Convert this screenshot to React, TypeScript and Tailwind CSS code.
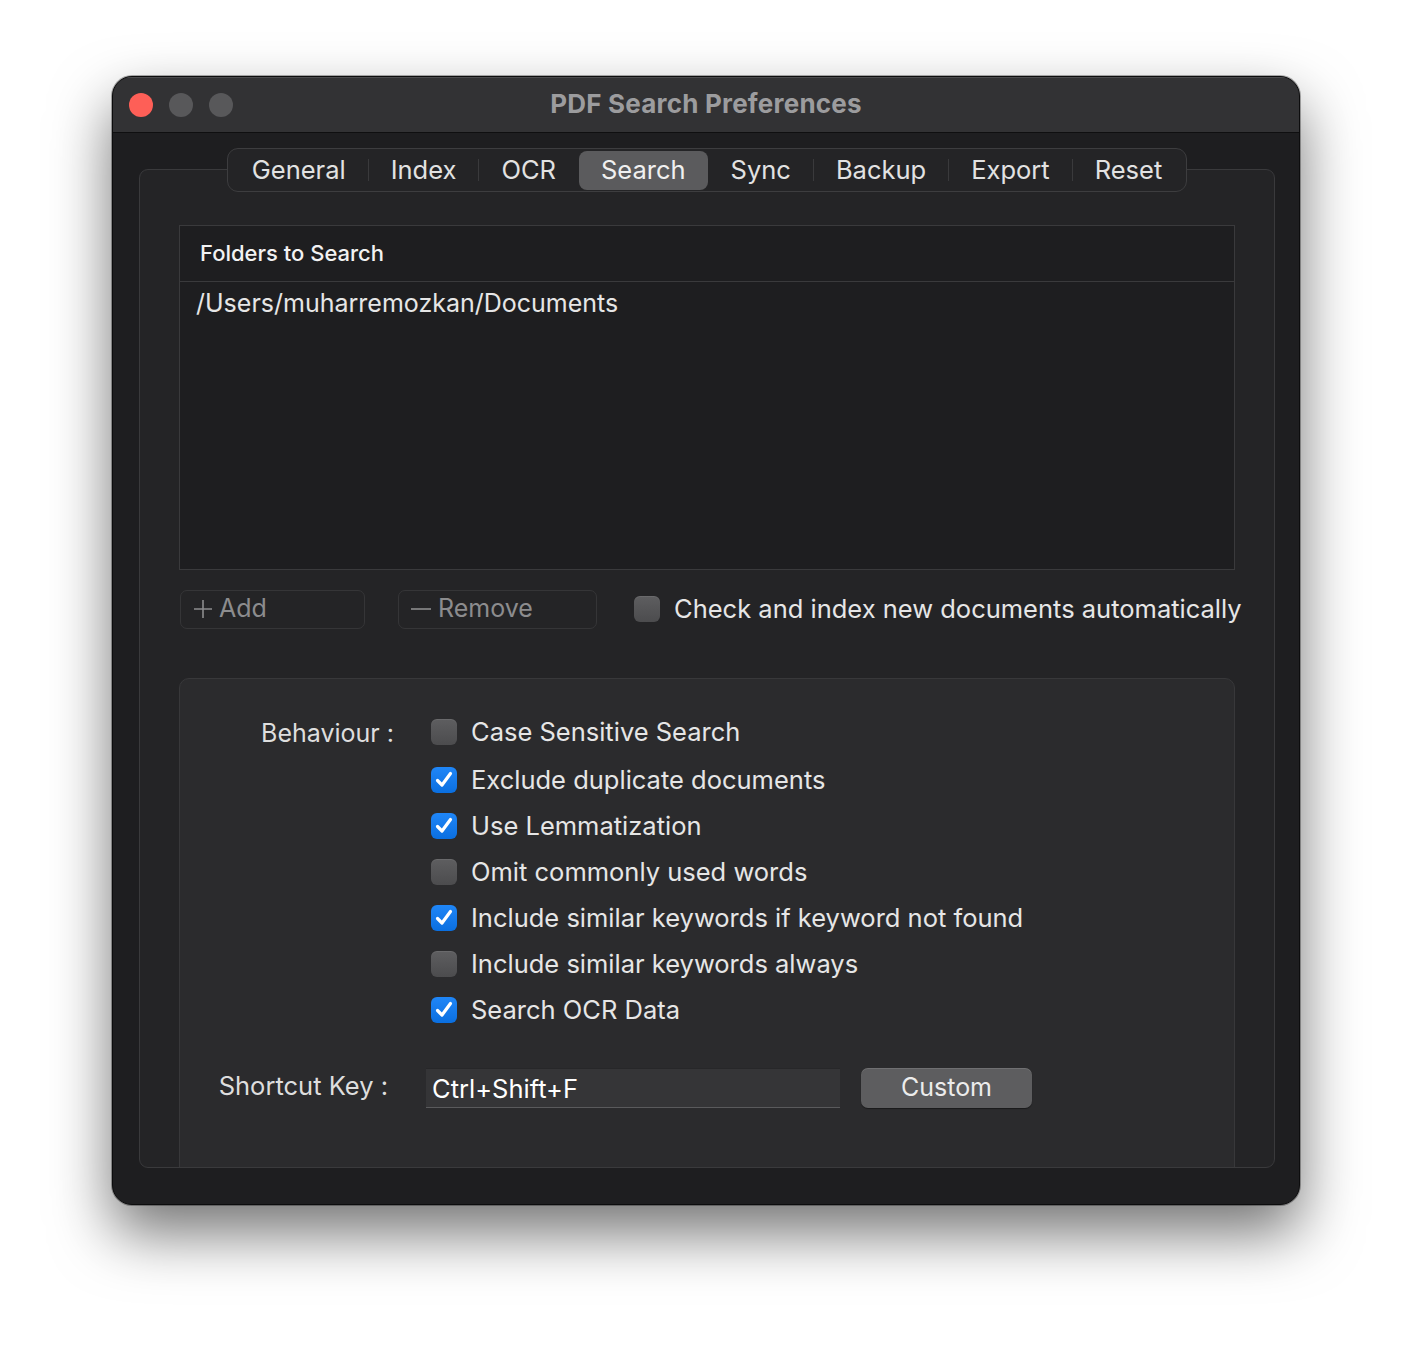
import { useState } from 'react';

const tabs = ['General', 'Index', 'OCR', 'Search', 'Sync', 'Backup', 'Export', 'Reset'];

const behaviours = [
  { label: 'Case Sensitive Search', checked: false },
  { label: 'Exclude duplicate documents', checked: true },
  { label: 'Use Lemmatization', checked: true },
  { label: 'Omit commonly used words', checked: false },
  { label: 'Include similar keywords if keyword not found', checked: true },
  { label: 'Include similar keywords always', checked: false },
  { label: 'Search OCR Data', checked: true },
];

function CheckBox({ checked }: { checked: boolean }) {
  if (checked) {
    return (
      <span className="flex h-[26px] w-[26px] shrink-0 items-center justify-center rounded-[6px] bg-gradient-to-b from-[#1f86f7] to-[#0a6fe0]">
        <svg width="22" height="22" viewBox="0 0 22 22" fill="none">
          <path d="M4.5 11.5 L9 16 L17.5 4.5" stroke="white" strokeWidth="3.2" strokeLinecap="round" strokeLinejoin="round" />
        </svg>
      </span>
    );
  }
  return (
    <span className="block h-[26px] w-[26px] shrink-0 rounded-[6px] bg-gradient-to-b from-[#5e5e60] to-[#4c4c4e] shadow-[inset_0_1px_0_rgba(255,255,255,0.08)]" />
  );
}

export default function App() {
  const [active] = useState('Search');

  return (
    <div className="min-h-[1354px] bg-white pl-[112px] pt-[76px] font-['Inter','Liberation_Sans',sans-serif]">
      <div className="flex h-[1129px] w-[1188px] flex-col overflow-hidden rounded-[20px] border border-[#0c0c0d] bg-[#1e1e20] shadow-[0_28px_60px_rgba(0,0,0,0.55),0_0_0_1px_rgba(0,0,0,0.3)]">
        {/* Title bar */}
        <div className="relative flex h-[56px] shrink-0 items-center border-b border-[#0f0f10] bg-[#323234] shadow-[inset_0_1px_0_rgba(255,255,255,0.12)]">
          <div className="flex items-center gap-[16px] pl-[16px]">
            <span className="h-[24px] w-[24px] rounded-full bg-[#fe5f57]" />
            <span className="h-[24px] w-[24px] rounded-full bg-[#58585a]" />
            <span className="h-[24px] w-[24px] rounded-full bg-[#58585a]" />
          </div>
          <div className="pointer-events-none absolute inset-x-0 -mt-[2px] text-center text-[26px] font-bold tracking-[0.2px] text-[#9c9c9e]">
            PDF Search Preferences
          </div>
        </div>

        {/* Body */}
        <div className="flex min-h-0 flex-1 flex-col pb-[36px] pl-[26px] pr-[24px] pt-[36px]">
          <div className="flex min-h-0 flex-1 flex-col rounded-[9px] border border-[#3a3a3c] bg-[#242426]">
            {/* Segmented control */}
            <div className="-mt-[22px] flex justify-center">
              <div className="flex h-[44px] items-center rounded-[11px] border border-[#3d3d3f] bg-[#242426] px-[2px]">
                {tabs.map((t, i) => {
                  const sel = t === active;
                  const prevSel = i > 0 && tabs[i - 1] === active;
                  return (
                    <div key={t} className="flex items-center">
                      {i > 0 && (
                        <span className={`h-[22px] w-px ${sel || prevSel ? 'bg-transparent' : 'bg-[#3a3a3c]'}`} />
                      )}
                      <span
                        className={`flex h-[39px] items-center rounded-[8px] px-[22px] text-[25.5px] ${
                          sel ? 'bg-[#5b5b5d] text-[#f0f0f0]' : 'text-[#e2e2e2]'
                        }`}
                      >
                        {t}
                      </span>
                    </div>
                  );
                })}
              </div>
            </div>

            <div className="flex min-h-0 flex-1 flex-col overflow-hidden rounded-b-[9px] px-[39px] pt-[33px]">
              {/* Folder table */}
              <div className="flex h-[345px] shrink-0 flex-col border border-[#3a3a3c] bg-[#1e1e20]">
                <div className="flex h-[56px] shrink-0 items-center border-b border-[#3a3a3c] px-[20px] text-[22px] font-medium text-[#f2f2f2]">
                  Folders to Search
                </div>
                <div className="px-[16px] pt-[3px] text-[25px] text-[#e6e6e6]">/Users/muharremozkan/Documents</div>
              </div>

              {/* Buttons row */}
              <div className="mt-[19px] flex h-[40px] shrink-0 items-center">
                <button className="ml-[1px] flex h-[39px] w-[185px] shrink-0 items-center gap-[6px] rounded-[7px] border border-[#353537] pl-[12px] text-[25px] text-[#8c8c8e]">
                  <svg width="20" height="20" viewBox="0 0 20 20">
                    <path d="M10 1 V19 M1 10 H19" stroke="#8c8c8e" strokeWidth="1.6" />
                  </svg>
                  Add
                </button>
                <button className="ml-[33px] flex h-[39px] w-[199px] shrink-0 items-center gap-[7px] rounded-[7px] border border-[#353537] pl-[12px] text-[25px] text-[#8c8c8e]">
                  <svg width="20" height="20" viewBox="0 0 20 20">
                    <path d="M0 10 H20" stroke="#8c8c8e" strokeWidth="1.6" />
                  </svg>
                  Remove
                </button>
                <div className="ml-[37px] flex shrink-0 items-center gap-[14px]">
                  <CheckBox checked={false} />
                  <span className="whitespace-nowrap text-[25.5px] text-[#e6e6e6]">Check and index new documents automatically</span>
                </div>
              </div>

              {/* Behaviour group */}
              <div className="mt-[49px] h-[540px] shrink-0 rounded-[10px] border border-[#38383a] bg-[#2b2b2d] pt-[39px]">
                <div className="flex">
                  <div className="-mt-[3px] w-[214px] shrink-0 text-right text-[25px] text-[#dedede]">Behaviour :</div>
                  <div className="ml-[37px] flex flex-col">
                    {behaviours.map((b, i) => (
                      <div key={b.label} className={`flex h-[28px] items-center gap-[14px] ${i === 0 ? '' : i === 1 ? 'mt-[20px]' : 'mt-[18px]'}`}>
                        <CheckBox checked={b.checked} />
                        <span className="whitespace-nowrap text-[25.5px] text-[#e6e6e6]">{b.label}</span>
                      </div>
                    ))}
                  </div>
                </div>

                <div className="mt-[44px] flex items-center">
                  <div className="-mt-[4px] w-[208px] shrink-0 text-right text-[25.5px] text-[#dedede]">Shortcut Key :</div>
                  <div className="ml-[38px] flex h-[40px] w-[414px] items-center border-b border-[#5a5a5c] bg-[#353537] pl-[6px] pt-[4px] text-[25.5px] text-white shadow-[inset_0_1px_0_rgba(0,0,0,0.25)]">
                    Ctrl+Shift+F
                  </div>
                  <button className="ml-[21px] flex h-[40px] w-[171px] items-center justify-center rounded-[7px] bg-[#5d5d5f] text-[25px] text-[#ececec] shadow-[0_1px_1px_rgba(0,0,0,0.4),inset_0_1px_0_rgba(255,255,255,0.12)]">
                    Custom
                  </button>
                </div>
              </div>
            </div>
          </div>
        </div>
      </div>
    </div>
  );
}
